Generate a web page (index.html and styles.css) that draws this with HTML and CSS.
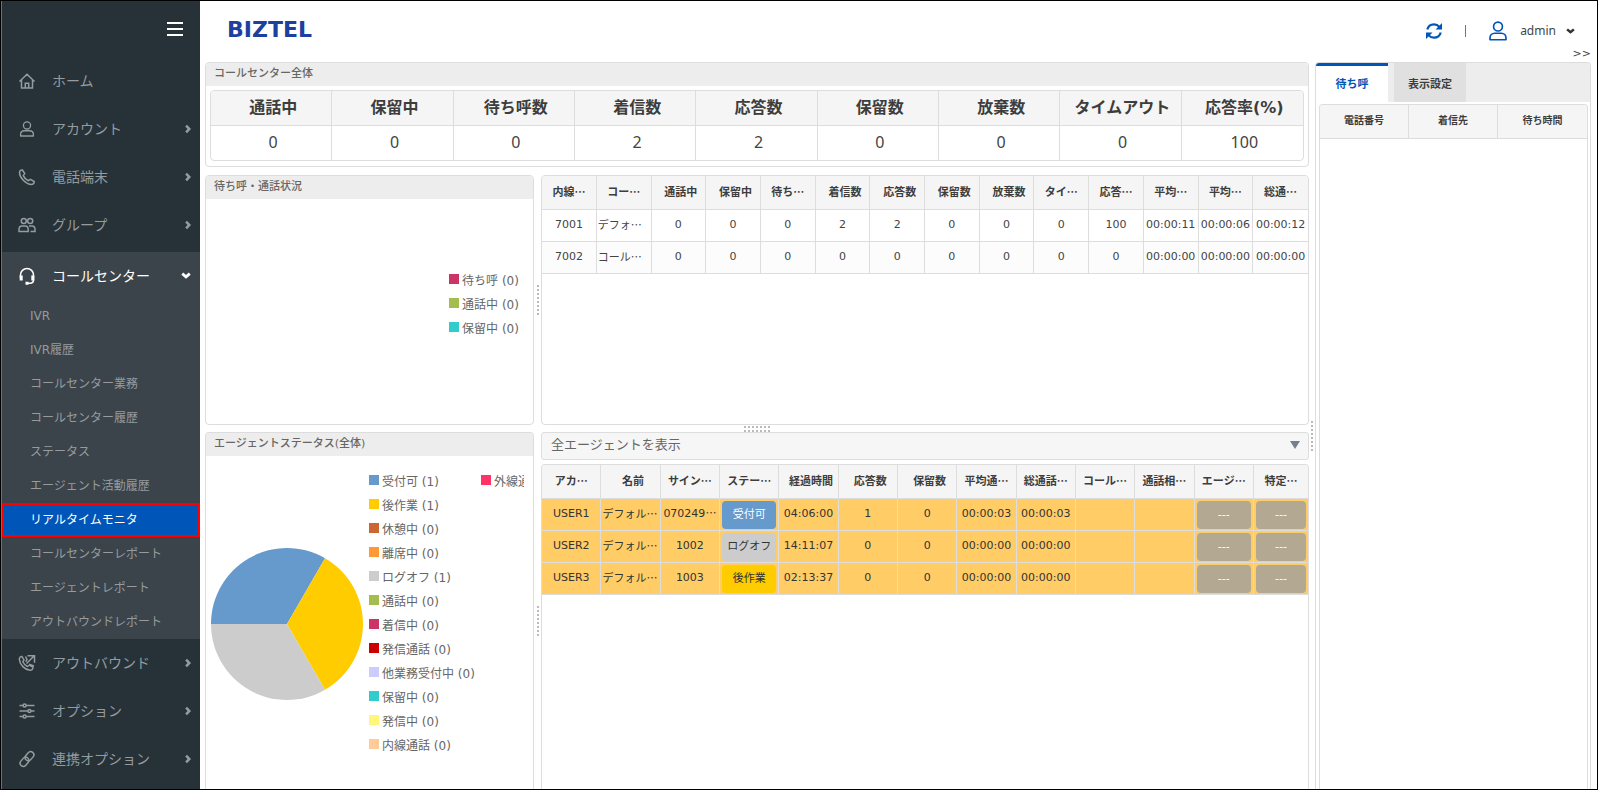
FILE: index.html
```html
<!DOCTYPE html>
<html lang="ja">
<head>
<meta charset="utf-8">
<title>BIZTEL - リアルタイムモニタ</title>
<link rel="stylesheet" href="styles.css">
</head>
<body>
<svg class="defs" aria-hidden="true">
  <symbol id="chevron" viewBox="0 0 8 12"><path d="M1.500 1.500 5.800 6 1.500 10.500" fill="none" stroke="currentColor" stroke-width="3.400"/></symbol>
  <symbol id="chevron-down" viewBox="0 0 12 8"><path d="M1.500 1.800 6 5.600 10.500 1.800" fill="none" stroke="currentColor" stroke-width="3.400"/></symbol>
  <symbol id="user" viewBox="0 0 18 18"><g fill="none" stroke="currentColor" stroke-width="1.500"><circle cx="9" cy="5" r="4"/><path d="M1.800 16.900v-1.500c0-2.500 1.700-4.400 4.200-4.400h6c2.500 0 4.200 1.900 4.200 4.400v1.500z" stroke-linejoin="round"/></g></symbol>
</svg>
<div class="app">
  <aside class="sidebar">
    <div class="menu-bar">
      <button class="menu-toggle" type="button" aria-label="メニュー"><svg width="16" height="14" viewBox="0 0 16 14"><path d="M0 1h16M0 7h16M0 13h16" stroke="#fff" stroke-width="2"/></svg></button>
    </div>
    <nav class="nav">
      <a class="nav-item" href="#"><svg class="icon" viewBox="0 0 18 18"><path d="M1.500 9.500 9 2.300l7.500 7.200M3.500 8v8h11V8M7.300 15.800v-4.600h3.400v4.600" /></svg><span>ホーム</span></a>
      <a class="nav-item" href="#"><svg class="icon icon-small" viewBox="0 0 18 18"><use href="#user"/></svg><span>アカウント</span><svg class="arrow"><use href="#chevron"/></svg></a>
      <a class="nav-item" href="#"><svg class="icon" viewBox="0 0 18 18"><path d="M4.400 2 6.700 5.600 5.300 7.600C6.200 9.800 8.200 11.800 10.400 12.700l2-1.400 3.800 2.200c.2 1.700-1.200 3-2.900 3C8 16.300 1.700 10 1.500 4.700 1.500 3 2.700 1.700 4.400 2z"/></svg><span>電話端末</span><svg class="arrow"><use href="#chevron"/></svg></a>
      <a class="nav-item" href="#"><svg class="icon" viewBox="0 0 18 18"><circle cx="5.800" cy="5" r="2.500"/><circle cx="12.200" cy="5" r="2.500"/><path d="M1 15.500v-2C1 11.600 2.300 10 4 10h3.200c1.700 0 3 1.600 3 3.500v2zM11 10h3c1.700 0 3 1.600 3 3.500v2h-4.500"/></svg><span>グループ</span><svg class="arrow"><use href="#chevron"/></svg></a>
      <div class="nav-group">
        <a class="nav-item nav-open" href="#"><svg class="icon" viewBox="0 0 18 18"><path d="M2.500 11V8a6.500 6.500 0 0 1 13 0v5c0 2-1.500 3.200-3.500 3.200H9.500"/><path d="M3.200 8.500v5M14.800 8.500v5M7.500 16.200h3" stroke-width="3"/></svg><span>コールセンター</span><svg class="arrow arrow-down"><use href="#chevron-down"/></svg></a>
        <a class="sub-item" href="#">IVR</a>
        <a class="sub-item" href="#">IVR履歴</a>
        <a class="sub-item" href="#">コールセンター業務</a>
        <a class="sub-item" href="#">コールセンター履歴</a>
        <a class="sub-item" href="#">ステータス</a>
        <a class="sub-item" href="#">エージェント活動履歴</a>
        <a class="sub-item sub-active" href="#">リアルタイムモニタ</a>
        <a class="sub-item" href="#">コールセンターレポート</a>
        <a class="sub-item" href="#">エージェントレポート</a>
        <a class="sub-item" href="#">アウトバウンドレポート</a>
      </div>
      <a class="nav-item" href="#"><svg class="icon" viewBox="0 0 18 18"><path d="M4 2.500 6 6 4.800 7.800c.9 2 2.600 3.800 4.700 4.700l1.800-1.300 3.600 2c.2 1.700-1.100 3.100-2.800 3.100C7 16 1.500 10.500 1.300 5.200 1.300 3.600 2.400 2.300 4 2.500zM8.500 9.500l7.500-7.500M9.500 1.700h7v7M7.500 2.500l1.500 3-1.300 2.200M11 10.200l5 1.800" /></svg><span>アウトバウンド</span><svg class="arrow"><use href="#chevron"/></svg></a>
      <a class="nav-item" href="#"><svg class="icon" viewBox="0 0 18 18"><path d="M1.500 3.500h3.600M8.100 3.500h8.400M1.500 9h8.400M12.900 9h3.600M1.500 14.500h3.600M8.100 14.500h8.400"/><circle cx="6.600" cy="3.500" r="1.500"/><circle cx="11.400" cy="9" r="1.500"/><circle cx="6.600" cy="14.500" r="1.500"/></svg><span>オプション</span><svg class="arrow"><use href="#chevron"/></svg></a>
      <a class="nav-item" href="#"><svg class="icon" viewBox="0 0 18 18"><rect x="6.500" y="3" width="10" height="6.400" rx="3.200" transform="rotate(-50 11.500 6.200)"/><rect x="1.500" y="8.600" width="10" height="6.400" rx="3.200" transform="rotate(-50 6.500 11.800)"/></svg><span>連携オプション</span><svg class="arrow"><use href="#chevron"/></svg></a>
    </nav>
  </aside>

  <main class="main">
    <header class="topbar">
      <a class="logo" href="#">BIZTEL</a>
      <button class="refresh" type="button" aria-label="更新"><svg width="18" height="18" viewBox="0 0 18 18"><path d="M2.300 7.500C3.100 4.300 5.700 2.300 9 2.300c2.300 0 4 .9 5.400 2.600M15.700 10.500C14.900 13.700 12.300 15.700 9 15.700c-2.300 0-4-.9-5.400-2.600" fill="none" stroke="currentColor" stroke-width="2.200"/><path d="M17 1v6.500h-6.500zM1 17v-6.500h6.500z" fill="currentColor"/></svg></button>
      <span class="divider"></span>
      <button class="account" type="button"><svg class="account-icon" width="20" height="20"><use href="#user"/></svg><span>admin</span><svg class="account-arrow" width="9" height="6"><use href="#chevron-down"/></svg></button>
    </header>
    <div class="collapse"><a href="#">&gt;&gt;</a></div>

    <div class="workspace">
      <div class="center">
        <section class="panel">
          <h2 class="panel-title">コールセンター全体</h2>
          <div class="summary-wrap">
            <table class="summary">
              <thead><tr><th>通話中</th><th>保留中</th><th>待ち呼数</th><th>着信数</th><th>応答数</th><th>保留数</th><th>放棄数</th><th>タイムアウト</th><th>応答率(%)</th></tr></thead>
              <tbody><tr><td>0</td><td>0</td><td>0</td><td>2</td><td>2</td><td>0</td><td>0</td><td>0</td><td>100</td></tr></tbody>
            </table>
          </div>
        </section>

        <div class="split">
          <section class="panel">
            <h2 class="panel-title">待ち呼・通話状況</h2>
            <ul class="legend legend-calls">
              <li><i class="swatch c-magenta"></i>待ち呼 (0)</li>
              <li><i class="swatch c-green"></i>通話中 (0)</li>
              <li><i class="swatch c-teal"></i>保留中 (0)</li>
            </ul>
          </section>
          <div class="gutter gutter-v"><span class="grip grip-v"></span></div>
          <section class="panel">
            <table class="grid calls">
              <thead><tr><th>内線…</th><th>コー…</th><th class="full">通話中</th><th class="full">保留中</th><th>待ち…</th><th class="full">着信数</th><th class="full">応答数</th><th class="full">保留数</th><th class="full">放棄数</th><th>タイ…</th><th>応答…</th><th>平均…</th><th>平均…</th><th>総通…</th></tr></thead>
              <tbody>
                <tr><td>7001</td><td class="name">デフォ…</td><td>0</td><td>0</td><td>0</td><td>2</td><td>2</td><td>0</td><td>0</td><td>0</td><td>100</td><td>00:00:11</td><td>00:00:06</td><td>00:00:12</td></tr>
                <tr><td>7002</td><td class="name">コール…</td><td>0</td><td>0</td><td>0</td><td>0</td><td>0</td><td>0</td><td>0</td><td>0</td><td>0</td><td>00:00:00</td><td>00:00:00</td><td>00:00:00</td></tr>
              </tbody>
            </table>
          </section>

          <div class="gutter gutter-h"><span class="grip grip-h"></span></div>

          <section class="panel panel-open">
            <h2 class="panel-title">エージェントステータス(全体)</h2>
            <div class="status-chart">
              <svg class="pie" viewBox="-76 -76 152 152" role="img" aria-label="エージェントステータス">
                <path d="M0 0-76 0A76 76 0 0 1 38-65.800z" fill="#6699cc"/>
                <path d="M0 0 38-65.800A76 76 0 0 1 38 65.800z" fill="#ffcc00"/>
                <path d="M0 0 38 65.800A76 76 0 0 1-76 0z" fill="#cccccc"/>
              </svg>
              <ul class="legend">
                <li><i class="swatch c-blue"></i>受付可 (1)</li>
                <li><i class="swatch c-yellow"></i>後作業 (1)</li>
                <li><i class="swatch c-brown"></i>休憩中 (0)</li>
                <li><i class="swatch c-orange"></i>離席中 (0)</li>
                <li><i class="swatch c-gray"></i>ログオフ (1)</li>
                <li><i class="swatch c-green"></i>通話中 (0)</li>
                <li><i class="swatch c-magenta"></i>着信中 (0)</li>
                <li><i class="swatch c-red"></i>発信通話 (0)</li>
                <li><i class="swatch c-lavender"></i>他業務受付中 (0)</li>
                <li><i class="swatch c-teal"></i>保留中 (0)</li>
                <li><i class="swatch c-lemon"></i>発信中 (0)</li>
                <li><i class="swatch c-peach"></i>内線通話 (0)</li>
              </ul>
              <ul class="legend legend-more">
                <li><i class="swatch c-pink"></i><span class="clip">外線通話</span></li>
              </ul>
            </div>
          </section>
          <div class="gutter gutter-v gutter-low"><span class="grip grip-v"></span></div>
          <div class="agents-area">
            <div class="filter">
              <select class="filter-select" aria-label="表示するエージェント"><option>全エージェントを表示</option></select>
              <span class="filter-arrow"></span>
            </div>
            <section class="panel panel-open">
              <table class="grid agents">
                <colgroup><col><col><col><col><col><col><col><col><col><col><col><col><col class="col-last"></colgroup>
                <thead><tr><th>アカ…</th><th class="full">名前</th><th>サイン…</th><th>ステー…</th><th class="full">経過時間</th><th class="full">応答数</th><th class="full">保留数</th><th>平均通…</th><th>総通話…</th><th>コール…</th><th>通話相…</th><th>エージ…</th><th>特定…</th></tr></thead>
                <tbody>
                  <tr><td>USER1</td><td class="name">デフォル…</td><td>070249<span class="cjk">…</span></td><td><button class="pill pill-ready" type="button">受付可</button></td><td>04:06:00</td><td>1</td><td>0</td><td>00:00:03</td><td>00:00:03</td><td></td><td></td><td><button class="pill pill-none" type="button">---</button></td><td><button class="pill pill-none" type="button">---</button></td></tr>
                  <tr><td>USER2</td><td class="name">デフォル…</td><td>1002</td><td><button class="pill pill-off" type="button">ログオフ</button></td><td>14:11:07</td><td>0</td><td>0</td><td>00:00:00</td><td>00:00:00</td><td></td><td></td><td><button class="pill pill-none" type="button">---</button></td><td><button class="pill pill-none" type="button">---</button></td></tr>
                  <tr><td>USER3</td><td class="name">デフォル…</td><td>1003</td><td><button class="pill pill-work" type="button">後作業</button></td><td>02:13:37</td><td>0</td><td>0</td><td>00:00:00</td><td>00:00:00</td><td></td><td></td><td><button class="pill pill-none" type="button">---</button></td><td><button class="pill pill-none" type="button">---</button></td></tr>
                </tbody>
              </table>
            </section>
          </div>
        </div>
      </div>

      <div class="gutter gutter-v gutter-low"><span class="grip grip-v"></span></div>

      <section class="panel panel-open queue">
        <div class="tabs" role="tablist">
          <button class="tab tab-active" type="button" role="tab" aria-selected="true">待ち呼</button>
          <button class="tab" type="button" role="tab" aria-selected="false">表示設定</button>
        </div>
        <div class="queue-body">
          <table class="grid queue-table">
            <thead><tr><th>電話番号</th><th>着信先</th><th>待ち時間</th></tr></thead>
          </table>
        </div>
      </section>
    </div>
  </main>
</div>
</body>
</html>
```
FILE: styles.css
```css
* { box-sizing: border-box; }

body {
  margin: 0;
  background: #fff;
  color: #444;
  font-family: "DejaVu Sans", "Noto Sans CJK JP", sans-serif;
  font-size: 12px;
}

button {
  margin: 0;
  padding: 0;
  border: 0;
  background: none;
  color: inherit;
  font: inherit;
  cursor: pointer;
}

a { color: inherit; text-decoration: none; }
ul { margin: 0; padding: 0; list-style: none; }
.defs { display: none; }
.cjk { font-family: "Noto Sans CJK JP", sans-serif; line-height: 1; }

.app {
  display: flex;
  min-height: 100vh;
  border: 1px solid #000;
}

/* Sidebar */
.sidebar {
  flex: none;
  width: 199px;
  background: #263238;
  border-left: 1px solid #6b7377;
  color: #959b9e;
}

.menu-bar {
  display: flex;
  align-items: center;
  justify-content: flex-end;
  height: 56px;
  padding-right: 17px;
}

.menu-toggle { display: flex; }

.nav-item {
  display: flex;
  align-items: center;
  height: 48px;
  padding: 0 9px 0 16px;
  font-size: 14px;
}

.nav-item span { padding-bottom: 2px; }

.icon {
  width: 18px;
  height: 18px;
  margin-right: 16px;
  fill: none;
  stroke: currentColor;
  stroke-width: 1.5;
}

.icon-small { padding: 1px; }
.arrow { width: 6px; height: 10px; margin-left: auto; }
.arrow-down { width: 10px; height: 7px; }

.nav-group {
  margin-top: 3px;
  background: #3c444b;
}

.nav-open { height: 47px; color: #fff; }

.sub-item {
  display: block;
  height: 34px;
  padding-left: 28px;
  line-height: 34px;
}

.sub-active {
  background: #0055b8;
  color: #fff;
  outline: 2px solid #f00;
  outline-offset: -2px;
}

/* Header */
.main {
  display: flex;
  flex: 1;
  flex-direction: column;
  min-width: 0;
  padding: 0 6px 0 5px;
}

.topbar {
  display: flex;
  align-items: center;
  height: 45px;
  padding: 14px 16px 0 22px;
}

.logo {
  margin-right: auto;
  padding-bottom: 2px;
  color: #1c3fa0;
  font-size: 22px;
  font-weight: bold;
  line-height: 24px;
}

.refresh { display: flex; color: #0055b8; }

.divider {
  width: 1px;
  height: 12px;
  margin: 0 22px;
  background: #5e7f99;
}

.account {
  display: flex;
  align-items: center;
  font-family: "Noto Sans", sans-serif;
  font-size: 12px;
}

.account-icon { margin-right: 12px; color: #0055b8; }
.account-arrow { margin-left: 10px; color: #333; }

.collapse {
  height: 16px;
  font-size: 11px;
  line-height: 16px;
  text-align: right;
}

/* Panels */
.workspace {
  display: grid;
  flex: 1;
  grid-template-columns: minmax(0, 1fr) 6px minmax(0, 276px);
}

.center {
  display: flex;
  flex-direction: column;
  gap: 8px;
  min-width: 0;
}

.panel {
  min-width: 0;
  border: 1px solid #ddd;
  border-radius: 4px;
  background: #fff;
  overflow: hidden;
}

.panel-open {
  border-bottom: 0;
  border-radius: 4px 4px 0 0;
}

.panel-title {
  height: 23px;
  margin: 0;
  padding-left: 8px;
  background: #ededed;
  color: #666;
  font-size: 11px;
  font-weight: 500;
  line-height: 21px;
}

.split {
  display: grid;
  flex: 1;
  grid-template-columns: minmax(0, 3fr) 7px minmax(0, 7fr);
  grid-template-rows: minmax(250px, auto) 7px 1fr;
}

.gutter {
  display: flex;
  align-items: center;
  justify-content: center;
}

.gutter-h { grid-column: 1 / -1; }
.gutter-low { padding-top: 20px; }

.grip {
  background-image: conic-gradient(from 90deg at 2px 2px, transparent 90deg, transparent 270deg, #bbb 270deg);
  background-size: 4px 4px;
}

.grip-v { width: 6px; height: 30px; }
.grip-h { width: 30px; height: 6px; }

/* Summary table */
table {
  width: 100%;
  border-collapse: separate;
  border-spacing: 0;
  table-layout: fixed;
}

.summary-wrap { padding: 4px 4px 5px; }

.summary {
  border: 1px solid #ddd;
  border-radius: 4px;
  overflow: hidden;
}

.summary th,
.summary td {
  height: 35px;
  padding: 0 0 0 4px;
  border-right: 1px solid #ddd;
  font-size: 16px;
  line-height: 24px;
  text-align: center;
}

.summary th {
  border-bottom: 1px solid #ddd;
  background: #f5f5f5;
  color: #3d3d3d;
}

.summary td {
  height: 34px;
  padding-bottom: 3px;
  font-family: "Noto Sans", sans-serif;
}

.summary th:last-child,
.summary td:last-child { border-right: 0; }

/* Data grids */
.grid th,
.grid td {
  height: 32px;
  padding: 0 0 2px;
  border-right: 1px solid #ddd;
  border-bottom: 1px solid #ddd;
  font-size: 11px;
  line-height: 16px;
  text-align: center;
  white-space: nowrap;
  overflow: hidden;
}

.grid th {
  height: 34px;
  padding-bottom: 4px;
  background: #f5f5f5;
  color: #3d3d3d;
  font-family: "Noto Sans CJK JP", sans-serif;
}

.grid .full { padding-left: 5px; }

.grid .name {
  padding: 0 0 4px 1px;
  font-family: "Noto Sans CJK JP", sans-serif;
  text-align: left;
}

.grid tr > :last-child { border-right: 0; }
.calls tbody tr:nth-child(even) { background: #fcfcfc; }
.agents tbody tr { background: #ffcc66; color: #333; }
.agents td:has(.pill) { padding: 1px 0 0; }
.col-last { width: 54px; }

.pill {
  display: block;
  width: calc(100% - 4px);
  height: 28px;
  margin: 0 auto;
  border-radius: 4px;
  color: #fff;
  font-size: 11px;
  line-height: 28px;
}

.pill-ready { background: #6699cc; }
.pill-off { background: #cccccc; color: #333; }
.pill-work { background: #ffcc00; color: #333; }
.pill-none { background: #b3a993; }

/* Agent area */
.agents-area {
  display: grid;
  grid-template-rows: auto 1fr;
  gap: 4px;
  min-width: 0;
}

.filter { position: relative; }

.filter-select {
  display: block;
  width: 100%;
  height: 28px;
  padding: 0 32px 3px 9px;
  border: 1px solid #ddd;
  border-radius: 3px;
  appearance: none;
  background: #f6f6f6;
  color: #666;
  font-family: inherit;
  font-size: 13px;
}

.filter-arrow {
  position: absolute;
  top: 9px;
  right: 9px;
  border-top: 8px solid #75808a;
  border-right: 5px solid transparent;
  border-left: 5px solid transparent;
  pointer-events: none;
}

/* Charts */
.legend li {
  display: flex;
  align-items: center;
  gap: 3px;
  height: 24px;
  color: #666;
  white-space: nowrap;
}

.swatch { flex: none; width: 10px; height: 10px; }
.clip { min-width: 0; overflow: hidden; }

.legend-calls {
  width: 84px;
  margin-left: auto;
  padding-top: 68px;
}

.status-chart {
  display: flex;
  padding: 12px 9px 0 5px;
}

.pie {
  flex: none;
  width: 152px;
  height: 152px;
  margin: 80px 6px 0 0;
}

.status-chart .legend { flex: none; width: 112px; }
.status-chart .legend-more { flex: 1; min-width: 0; overflow: hidden; }

.c-blue { background: #6699cc; }
.c-yellow { background: #ffcc00; }
.c-brown { background: #cc6633; }
.c-orange { background: #ff9933; }
.c-gray { background: #cccccc; }
.c-green { background: #a5bc4e; }
.c-magenta { background: #cc3366; }
.c-red { background: #cc0000; }
.c-lavender { background: #ccccff; }
.c-teal { background: #33cccc; }
.c-lemon { background: #fff67a; }
.c-peach { background: #ffcc99; }
.c-pink { background: #ff3366; }

/* Queue panel */
.queue { display: flex; flex-direction: column; }

.tabs {
  display: flex;
  gap: 6px;
  height: 39px;
  background: #ededed;
}

.tab {
  width: 72px;
  background: #e0e0e0;
  color: #3d3d3d;
  font-size: 11px;
  font-weight: bold;
}

.tab-active {
  padding-bottom: 3px;
  border-top: 3px solid #0055b8;
  background: #fff;
  color: #0055b8;
}

.queue-body {
  flex: 1;
  margin: 2px 2px 0 3px;
  border: 1px solid #ddd;
  border-bottom: 0;
  border-radius: 4px 4px 0 0;
  overflow: hidden;
}

.queue-table th { font-size: 10px; }
```
